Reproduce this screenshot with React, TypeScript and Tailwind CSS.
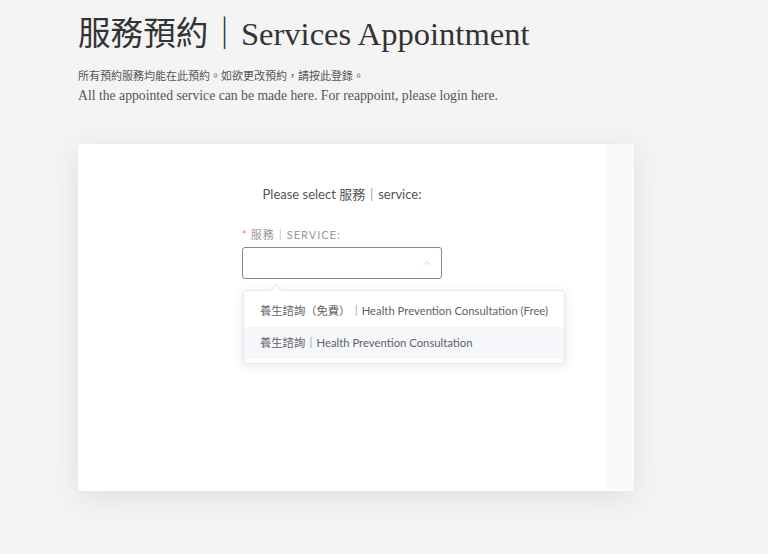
import { ChevronUp } from "lucide-react";

const options = [
  "養生諮詢（免費）｜Health Prevention Consultation (Free)",
  "養生諮詢｜Health Prevention Consultation",
];

export default function App() {
  return (
    <div className="min-h-[554px] w-full bg-[#f4f4f4] overflow-hidden">
      <div className="pl-[78px] pt-[14px]">
        <h1 className="text-[32.6px] leading-[40px] text-[#333] font-['Liberation_Serif','Noto_Sans_CJK_TC',serif]">
          服務預約｜Services Appointment
        </h1>
        <p className="mt-[14px] text-[11px] leading-[16px] text-[#555] font-['Liberation_Serif','Noto_Sans_CJK_TC',serif]">
          所有預約服務均能在此預約。如欲更改預約，請按此登錄。
        </p>
        <p className="mt-[3px] text-[13.7px] leading-[18px] text-[#555] font-['Liberation_Serif','Noto_Sans_CJK_TC',serif]">
          All the appointed service can be made here. For reappoint, please login here.
        </p>
      </div>

      <div className="ml-[78px] mt-[39px] w-[556px] h-[347px] rounded-[4px] bg-white shadow-[0_6px_32px_rgba(0,0,0,0.09)] flex overflow-hidden">
        <div className="flex-1 flex flex-col items-center pt-[41px] font-['Lato','Noto_Sans_CJK_TC',sans-serif]">
          <p className="text-[13px] leading-[18px] text-[#555]">Please select 服務｜service:</p>
          <div className="mt-[24px] w-[200px]">
            <div className="text-[11px] leading-[16px] tracking-[1px] text-[#999]">
              <span className="text-[#f56c6c] mr-[3px]">*</span>服務｜SERVICE:
            </div>
            <div className="mt-[4px] h-[32px] rounded-[3px] border border-[#888] flex items-center justify-end pr-[8px]">
              <ChevronUp size={12} strokeWidth={1.5} className="text-[#c0c4cc]" />
            </div>
            <div className="relative mt-[11px] ml-[1px] w-[322px] rounded-[3px] bg-white border border-[#e8e8e8] shadow-[0_2px_12px_rgba(0,0,0,0.1)] py-[4px]">
              <div className="absolute -top-[5px] left-[28px] w-[8px] h-[8px] rotate-45 bg-white border-l border-t border-[#e8e8e8]" />
              {options.map((o, i) => (
                <div
                  key={o}
                  className={`h-[32px] flex items-center px-[16px] text-[11.3px] text-[#606266] whitespace-nowrap ${i === 1 ? "bg-[#f5f7fa]" : ""}`}
                >
                  {o}
                </div>
              ))}
            </div>
          </div>
        </div>
        <div className="w-[28px] bg-[#fafafa]" />
      </div>
    </div>
  );
}
